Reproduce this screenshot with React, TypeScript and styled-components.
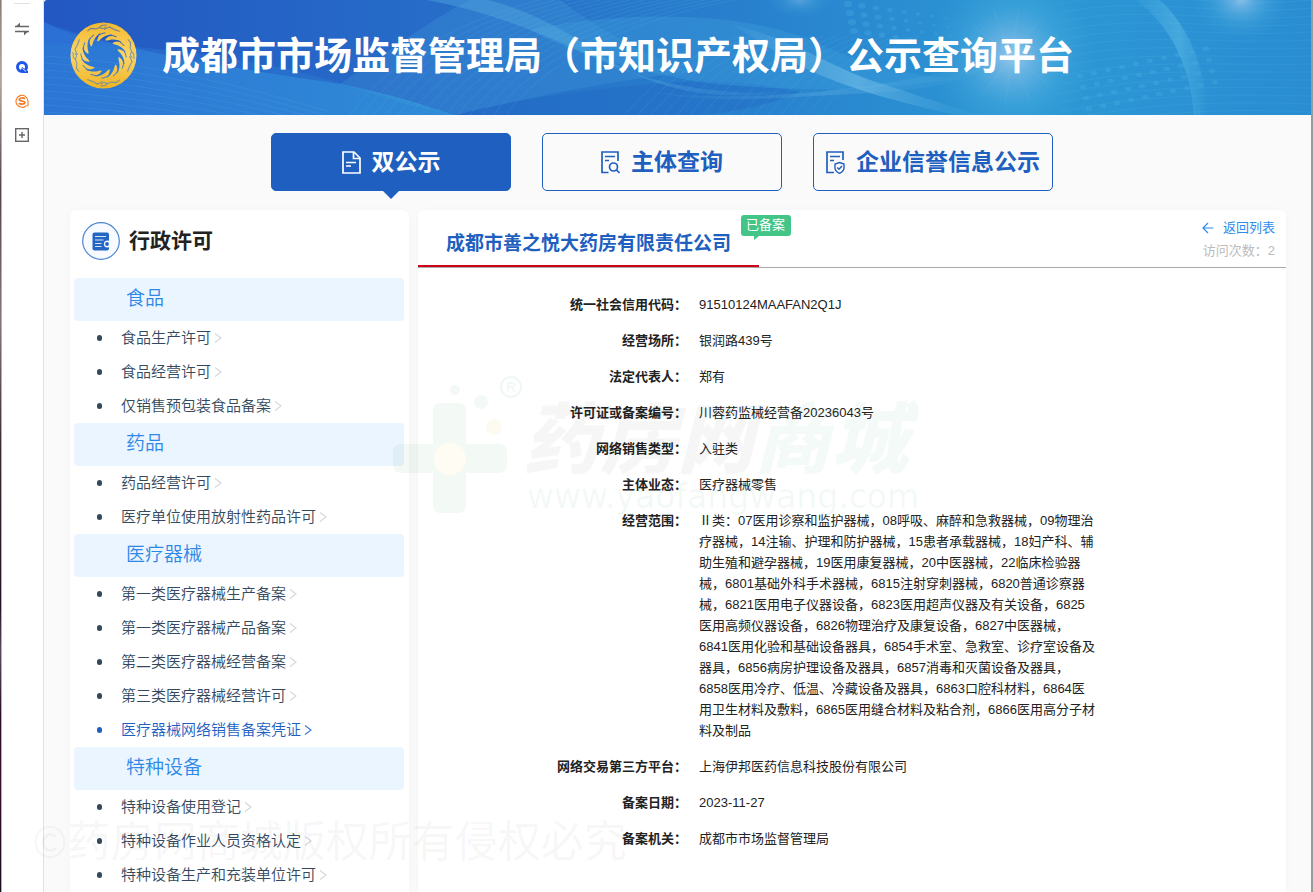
import React from "react";
import styled, { createGlobalStyle } from "styled-components";

const GlobalStyle = createGlobalStyle`
  * { box-sizing: border-box; }
  body {
    margin: 0;
    background: #fafafa;
    color: #222;
    font-family: "Liberation Sans", "Noto Sans CJK SC", sans-serif;
    font-size: 13px;
    line-height: 21px;
  }
  button { font-family: inherit; border: 0; background: none; padding: 0; cursor: pointer; }
  a { color: inherit; text-decoration: none; }
  h1, h2, h3, ul, dl, dd { margin: 0; padding: 0; }
`;

const Shell = styled.div`
  position: relative;
  display: flex;
  min-height: 100vh;
  overflow: hidden;
`;

const DesktopEdge = styled.div`
  flex: none;
  width: 2px;
  border-right: 1px solid #b5b0b2;
  background: linear-gradient(#8d7d78 0%, #b5a89f 9%, #54434a 21%, #85787a 36%, #3c2935 50%, #241222 68%, #5a4c5c 73%, #2b0f25 80%, #3c0f28 88%, #150a1c 100%);
`;

const WindowEdge = styled.div`
  flex: none;
  width: 2px;
  background: #999;
`;

const Rail = styled.aside`
  flex: none;
  width: 42px;
  display: flex;
  flex-direction: column;
  align-items: center;
  padding: 3px 1px 0 0;
  background: #fff;
  border-right: 1px solid #e2e2e4;
`;

const RailDivider = styled.div`
  width: 16px;
  height: 1px;
  margin-bottom: 4px;
  background: #e0e0e0;
`;

const RailButton = styled.button<{ $tall?: boolean }>`
  display: flex;
  align-items: center;
  justify-content: center;
  width: 32px;
  height: ${(p) => (p.$tall ? 42 : 34)}px;
`;

const Page = styled.div`
  flex: 1;
  min-width: 0;
  display: flex;
  flex-direction: column;
  background: #fafafa;
`;

const Banner = styled.header`
  position: relative;
  display: flex;
  align-items: center;
  gap: 25px;
  height: 115px;
  padding: 0 26px 4px;
  border-top-left-radius: 4px;
  overflow: hidden;
  background: #2878cd;
`;

const BannerArt = styled.svg`
  position: absolute;
  inset: 0;
  width: 100%;
  height: 100%;
`;

const Emblem = styled.svg`
  position: relative;
  flex: none;
  width: 67px;
  height: 67px;
`;

const BannerTitle = styled.h1`
  position: relative;
  color: #fff;
  font-size: 38px;
  line-height: 56px;
  font-weight: 700;
  white-space: nowrap;
`;

const Tabs = styled.nav`
  display: flex;
  justify-content: center;
  gap: 31px;
  padding: 18px 31px 19px 0;
`;

const Tab = styled.button<{ $active?: boolean }>`
  position: relative;
  display: flex;
  align-items: center;
  justify-content: center;
  gap: 11px;
  width: 240px;
  height: 58px;
  border: 1px solid #1e5fbf;
  border-radius: 5px;
  background: ${(p) => (p.$active ? "#1e5fbf" : "#fafafa")};
  color: ${(p) => (p.$active ? "#fff" : "#1e5fbf")};
  font-size: 23px;
  line-height: 34px;
  font-weight: 700;
  white-space: nowrap;

  &::after {
    content: "";
    display: ${(p) => (p.$active ? "block" : "none")};
    position: absolute;
    top: 100%;
    left: 50%;
    margin-left: -9px;
    border: 9px solid transparent;
    border-top-color: #1e5fbf;
    border-bottom: 0;
  }
`;

const Columns = styled.div`
  flex: 1;
  display: flex;
  align-items: stretch;
  gap: 9px;
  padding: 0 25px 0 26px;
`;

const Card = styled.section`
  background: #fff;
  border-radius: 6px 6px 0 0;
  box-shadow: 0 0 10px rgba(0, 0, 0, 0.025);
`;

const Sidebar = styled(Card)`
  flex: none;
  width: 339px;
  padding: 0 5px 0 4px;
`;

const SidebarHead = styled.div`
  display: flex;
  align-items: center;
  gap: 9px;
  height: 68px;
  padding: 0 8px 6px;
`;

const SidebarTitle = styled.h2`
  font-size: 21px;
  line-height: 30px;
  font-weight: 700;
`;

const GroupTitle = styled.h3`
  height: 43px;
  padding-left: 52px;
  border-radius: 4px;
  background: #eaf5ff;
  color: #2f88e6;
  font-size: 19px;
  line-height: 41px;
  font-weight: 350;
`;

const GroupList = styled.ul`
  list-style: none;
`;

const GroupItem = styled.li<{ $current?: boolean }>`
  display: flex;
  align-items: center;
  height: 34px;
  padding-left: 23px;
  color: ${(p) => (p.$current ? "#1e5fbf" : "#34495e")};
  font-size: 15px;
  line-height: 22px;
  font-weight: 350;

  &::before {
    content: "";
    width: 5px;
    height: 6px;
    margin-right: 19px;
    border-radius: 3px;
    background: currentColor;
  }
`;

const GroupLink = styled.a<{ $current?: boolean }>`
  display: flex;
  align-items: center;
  gap: 3px;

  svg { color: ${(p) => (p.$current ? "#3f7fd8" : "#d5d8dc")}; }
`;

const Detail = styled(Card)`
  position: relative;
  flex: 1;
  min-width: 0;
`;

const DetailHead = styled.div`
  display: flex;
  justify-content: space-between;
  height: 58px;
  border-bottom: 1px solid #aaa;
`;

const CompanyName = styled.h2`
  position: relative;
  padding: 20px 28px 0;
  border-bottom: 2px solid #d0021b;
  color: #1e5fbf;
  font-size: 19px;
  line-height: 28px;
  font-weight: 700;
  white-space: nowrap;
`;

const StatusTag = styled.span`
  position: absolute;
  top: 5px;
  left: 100%;
  margin-left: -18px;
  padding-left: 5px;
  width: 50px;
  height: 21px;
  border-radius: 3px;
  background: #42c587;
  color: #fff;
  font-size: 13px;
  line-height: 19px;
  font-weight: 400;

  &::after {
    content: "";
    position: absolute;
    top: 100%;
    left: 13px;
    border-top: 4px solid #42c587;
    border-right: 5px solid transparent;
  }
`;

const DetailAside = styled.div`
  display: flex;
  flex-direction: column;
  align-items: flex-end;
  gap: 2px;
  padding: 7px 11px 0 0;
`;

const BackLink = styled.a`
  display: flex;
  align-items: center;
  gap: 9px;
  color: #2d8cf0;
`;

const Visits = styled.span`
  color: #bbb;
`;

const Fields = styled.dl`
  display: grid;
  grid-template-columns: 31% 47%;
  column-gap: 12px;
  row-gap: 15px;
  padding-top: 26px;
`;

const FieldLabel = styled.dt`
  text-align: right;
  font-weight: 700;
`;

const FieldValue = styled.dd`
  white-space: nowrap;
`;

const Line = styled.span`
  display: block;
`;

const BrandMark = styled.svg`
  position: absolute;
  top: 160px;
  left: -30px;
  width: 540px;
  height: 160px;
  pointer-events: none;
`;

const CopyrightMark = styled.div`
  position: absolute;
  left: 32px;
  bottom: 22px;
  color: rgba(0, 0, 0, 0.05);
  font-family: "Noto Sans CJK SC", sans-serif;
  font-size: 43px;
  line-height: 64px;
  font-weight: 400;
  white-space: nowrap;
  pointer-events: none;
`;

const range = (n: number) => Array.from({ length: n }, (_, i) => i);

function BannerBackground() {
  return (
    <BannerArt viewBox="44 0 1267 115" preserveAspectRatio="none" aria-hidden="true">
      <defs>
        <linearGradient id="sky" x1="0" x2="1">
          <stop offset="0" stopColor="#2458c2" />
          <stop offset="0.3" stopColor="#266cc8" />
          <stop offset="0.55" stopColor="#2880cd" />
          <stop offset="0.78" stopColor="#2c98d5" />
          <stop offset="1" stopColor="#2a8dd2" />
        </linearGradient>
        <linearGradient id="deep" x1="0" x2="1">
          <stop offset="0" stopColor="#2257c2" stopOpacity="0.9" />
          <stop offset="1" stopColor="#2468c6" stopOpacity="0" />
        </linearGradient>
        <linearGradient id="sea" x1="0" x2="1">
          <stop offset="0" stopColor="#2b6fd4" />
          <stop offset="1" stopColor="#3192d7" />
        </linearGradient>
        <linearGradient id="ribbon" x1="0" x2="1">
          <stop offset="0" stopColor="#5cb4e2" stopOpacity="0.35" />
          <stop offset="0.5" stopColor="#5cb4e2" stopOpacity="0.35" />
          <stop offset="1" stopColor="#5cb4e2" stopOpacity="0.08" />
        </linearGradient>
        <linearGradient id="streak" x1="0" x2="1">
          <stop offset="0" stopColor="#6abce6" stopOpacity="0.1" />
          <stop offset="0.5" stopColor="#7cc4ea" stopOpacity="0.7" />
          <stop offset="1" stopColor="#4aaade" stopOpacity="0.1" />
        </linearGradient>
        <linearGradient id="arc" x1="0" x2="1">
          <stop offset="0" stopColor="#5abbe6" stopOpacity="0.1" />
          <stop offset="0.6" stopColor="#5abbe6" stopOpacity="0.55" />
          <stop offset="1" stopColor="#5abbe6" stopOpacity="0" />
        </linearGradient>
        <radialGradient id="flare">
          <stop offset="0" stopColor="#a3cdee" stopOpacity="0.9" />
          <stop offset="0.25" stopColor="#7bbce7" stopOpacity="0.7" />
          <stop offset="0.6" stopColor="#4fb0df" stopOpacity="0.35" />
          <stop offset="1" stopColor="#3ba4da" stopOpacity="0" />
        </radialGradient>
      </defs>
      <rect x="44" width="1267" height="115" fill="url(#sky)" />
      <path d="M44 22C120 52 260 72 340 84C400 96 430 108 456 115H44Z" fill="url(#sea)" />
      <path d="M44 43C150 44 270 58 360 90C400 104 430 110 456 115H44Z" fill="#2f80d6" opacity="0.35" />
      <path d="M44 22C70 36 120 50 210 52C300 64 350 78 400 96L430 0H44Z" fill="url(#deep)" opacity="0.55" />
      <path d="M340 84C390 50 440 14 470 0H560C600 30 640 52 690 72C600 82 520 100 456 115C430 108 380 94 340 84Z" fill="#4da2dc" opacity="0.24" />
      <path d="M456 115C520 98 590 90 650 84C720 78 760 84 800 92C760 108 730 112 700 115Z" fill="#1f63c4" opacity="0.35" />
      <path d="M530 30C600 14 720 8 800 36C850 58 900 78 960 78C880 92 780 92 700 82C630 70 570 52 530 30Z" fill="#3fa1dc" opacity="0.35" />
      <path d="M427 0C490 12 540 32 600 60C650 84 720 96 790 92C700 104 640 84 590 48C560 26 520 8 488 0Z" fill="url(#ribbon)" />
      <path d="M730 24C790 38 830 66 870 80C910 92 950 108 985 115H955C900 102 850 90 800 66C770 50 750 34 730 24Z" fill="url(#streak)" opacity="0.75" />
      <path d="M650 92C720 100 800 96 880 84C940 74 985 66 1010 50C985 82 920 92 850 94C780 98 710 104 650 92Z" fill="url(#streak)" opacity="0.35" />
      <g fill="none" stroke="#63b7e8" strokeWidth="1" opacity="0.16">
        {range(14).map((i) => (
          <path key={i} d={`M${350 + i * 12} 115C${390 + i * 12} 60 ${460 + i * 13} 20 ${540 + i * 15} 0`} />
        ))}
        {range(16).map((i) => (
          <path key={i} d={`M${625 + i * 13} 115C${650 + i * 13} 84 ${690 + i * 12} 54 ${740 + i * 12} 36`} />
        ))}
        {range(11).map((i) => (
          <path key={i} d={`M44 ${56 + i * 7}C140 ${62 + i * 7} 230 ${82 + i * 6} 330 ${112 + i * 5}`} />
        ))}
        {range(16).map((i) => (
          <path key={i} d={`M1060 ${4 + i * 9}C1140 ${-14 + i * 9} 1220 ${10 + i * 7} 1311 ${i * 8}`} />
        ))}
      </g>
      <ellipse cx="800" cy="0" rx="34" ry="18" fill="url(#flare)" opacity="0.45" />
      <ellipse cx="1012" cy="56" rx="84" ry="84" fill="url(#flare)" />
      <ellipse cx="1241" cy="0" rx="48" ry="40" fill="url(#flare)" opacity="0.85" />
      <g stroke="#b6ddf4" strokeWidth="1" opacity="0.08">
        {range(12).map((i) => (
          <path key={i} d="M1012 46V6" transform={`rotate(${i * 30 + 8} 1012 56)`} />
        ))}
      </g>
      <path d="M1136 0C1168 24 1190 62 1194 115H1208C1206 64 1186 24 1160 0Z" fill="url(#arc)" />
      <g fill="#4db2e2" opacity="0.3">
        {range(32).map((i) => {
          const col = i % 8;
          const row = Math.floor(i / 8);
          return <ellipse key={i} cx={848 + col * 14 + row * 2} cy={4 + row * 9 + col * 2} rx={Math.max(1, 4 - col * 0.4)} ry={Math.max(1, 3 - col * 0.3)} />;
        })}
        {range(40).map((i) => {
          const col = i % 10;
          const row = Math.floor(i / 10);
          return <ellipse key={i} cx={1080 + col * 14 + row * 3} cy={76 + row * 11 - col * 3} rx="3" ry="2.2" />;
        })}
      </g>
    </BannerArt>
  );
}

function SunbirdEmblem() {
  return (
    <Emblem viewBox="-34 -34 68 68" role="img" aria-label="徽标">
      <defs>
        <linearGradient id="gold" x1="0" y1="0" x2="0" y2="1">
          <stop offset="0" stopColor="#f3b92e" />
          <stop offset="0.5" stopColor="#fbd568" />
          <stop offset="1" stopColor="#f0b323" />
        </linearGradient>
        <mask id="cutouts">
          <rect x="-34" y="-34" width="68" height="68" fill="#fff" />
          <circle r="15.500" fill="#000" />
          {range(12).map((i) => (
            <path key={i} d="M-5 -14C-2 -18.500 3 -21 9 -21.500C5 -19.500 2 -17.500 1 -14Z" fill="#000" transform={`rotate(${i * 30})`} />
          ))}
          {range(12).map((i) => (
            <path key={i} d="M-6 -19.500C-4 -21.500 -1 -22.800 2 -23" fill="none" stroke="#000" strokeWidth="0.9" transform={`rotate(${i * 30})`} />
          ))}
          {range(4).map((i) => (
            <g key={i} fill="none" stroke="#666" strokeWidth="1.100" strokeLinecap="round" transform={`rotate(${i * 90})`}>
              <path d="M-16 -25L-13 -27.500L-8 -27L-4 -28.500L-2 -30.500L3 -31M-4 -28.500C-1 -27 1 -27 2 -29M1 -26.500L6 -29L12 -26L16 -24.500" />
            </g>
          ))}
        </mask>
      </defs>
      <circle r="33.500" fill="url(#gold)" mask="url(#cutouts)" />
    </Emblem>
  );
}

type TabIconKind = "file" | "search" | "shield";

function TabIcon({ kind }: { kind: TabIconKind }) {
  return (
    <svg width="19" height="23" viewBox="0 0 19 23" fill="none" stroke="currentColor" strokeWidth="1.700" aria-hidden="true">
      {kind === "file" && (
        <>
          <path d="M1 1H12L18 7V22H1Z" />
          <path d="M11.500 1V7.500H18M4 11.500H14M4 15H9" />
        </>
      )}
      {kind === "search" && (
        <>
          <path d="M17 10V1H1V21.500H7.500M4 5.500H14M4 9.500H8" />
          <circle cx="12.500" cy="16" r="4" />
          <path d="M15.500 19L18.500 22" />
        </>
      )}
      {kind === "shield" && (
        <>
          <path d="M17 9V1H1V21.500H8M4 5.500H14M4 9.500H8" />
          <path d="M13.500 11.500L18 13V17C18 19.500 16 21.200 13.500 22.300C11 21.200 9 19.500 9 17V13Z" strokeWidth="1.400" />
          <path d="M11.300 16.500L13 18.200L16 15" strokeWidth="1.400" />
        </>
      )}
    </svg>
  );
}

function Chevron() {
  return (
    <svg width="8" height="12" viewBox="0 0 8 12" fill="none" stroke="currentColor" strokeWidth="1.200" aria-hidden="true">
      <path d="M1 1.500L7 6L1 10.500" />
    </svg>
  );
}

function LicenseIcon() {
  return (
    <svg width="38" height="38" viewBox="0 0 38 38" aria-hidden="true">
      <circle cx="19" cy="19" r="18.300" fill="#f7fafe" stroke="#4d85d0" strokeWidth="1.200" />
      <rect x="10.500" y="10.500" width="16.500" height="18" rx="2" fill="#2466c4" />
      <path d="M13 14.500H24M13 18H21.500M13 21.500H19.500M13 24.500H19.500" stroke="#d5e4f7" strokeWidth="1.200" />
      <circle cx="25.500" cy="22" r="3.600" fill="#f7fafe" />
      <circle cx="25" cy="22" r="1.900" fill="#2466c4" />
    </svg>
  );
}

interface Entry { name: string; current?: boolean }

const groups: { title: string; items: Entry[] }[] = [
  { title: "食品", items: [{ name: "食品生产许可" }, { name: "食品经营许可" }, { name: "仅销售预包装食品备案" }] },
  { title: "药品", items: [{ name: "药品经营许可" }, { name: "医疗单位使用放射性药品许可" }] },
  {
    title: "医疗器械",
    items: [
      { name: "第一类医疗器械生产备案" },
      { name: "第一类医疗器械产品备案" },
      { name: "第二类医疗器械经营备案" },
      { name: "第三类医疗器械经营许可" },
      { name: "医疗器械网络销售备案凭证", current: true },
    ],
  },
  {
    title: "特种设备",
    items: [{ name: "特种设备使用登记" }, { name: "特种设备作业人员资格认定" }, { name: "特种设备生产和充装单位许可" }],
  },
];

const fields: { label: string; lines: string[] }[] = [
  { label: "统一社会信用代码", lines: ["91510124MAAFAN2Q1J"] },
  { label: "经营场所", lines: ["银润路439号"] },
  { label: "法定代表人", lines: ["郑有"] },
  { label: "许可证或备案编号", lines: ["川蓉药监械经营备20236043号"] },
  { label: "网络销售类型", lines: ["入驻类"] },
  { label: "主体业态", lines: ["医疗器械零售"] },
  {
    label: "经营范围",
    lines: [
      "Ⅱ类：07医用诊察和监护器械，08呼吸、麻醉和急救器械，09物理治",
      "疗器械，14注输、护理和防护器械，15患者承载器械，18妇产科、辅",
      "助生殖和避孕器械，19医用康复器械，20中医器械，22临床检验器",
      "械，6801基础外科手术器械，6815注射穿刺器械，6820普通诊察器",
      "械，6821医用电子仪器设备，6823医用超声仪器及有关设备，6825",
      "医用高频仪器设备，6826物理治疗及康复设备，6827中医器械，",
      "6841医用化验和基础设备器具，6854手术室、急救室、诊疗室设备及",
      "器具，6856病房护理设备及器具，6857消毒和灭菌设备及器具，",
      "6858医用冷疗、低温、冷藏设备及器具，6863口腔科材料，6864医",
      "用卫生材料及敷料，6865医用缝合材料及粘合剂，6866医用高分子材",
      "料及制品",
    ],
  },
  { label: "网络交易第三方平台", lines: ["上海伊邦医药信息科技股份有限公司"] },
  { label: "备案日期", lines: ["2023-11-27"] },
  { label: "备案机关", lines: ["成都市市场监督管理局"] },
];

const tabs: { label: string; icon: TabIconKind }[] = [
  { label: "双公示", icon: "file" },
  { label: "主体查询", icon: "search" },
  { label: "企业信誉信息公示", icon: "shield" },
];

function SideRail() {
  return (
    <Rail>
      <RailDivider />
      <RailButton $tall aria-label="切换">
        <svg width="14" height="14" viewBox="0 0 14 14" fill="none" stroke="#666" strokeWidth="1.500">
          <path d="M0 4.500H14M0 9.500H14" />
          <path d="M0.500 5L5 0.500V5ZM13.500 9L9 13.500V9Z" fill="#666" stroke="none" />
        </svg>
      </RailButton>
      <RailButton aria-label="搜索">
        <svg width="14" height="14" viewBox="0 0 14 14">
          <circle cx="7" cy="7" r="4.500" fill="none" stroke="#1f56e8" strokeWidth="3" />
          <path d="M7 7L13 11V13H8L6 10Z" fill="#1f56e8" />
          <path d="M7.500 8.500L11 11.500" stroke="#fff" strokeWidth="0.900" />
        </svg>
      </RailButton>
      <RailButton aria-label="搜狗">
        <svg width="14" height="14" viewBox="0 0 14 14" fill="none" stroke="#f5781f">
          <path d="M11.500 11.300A6 6 0 1 1 13 7V12.500" strokeWidth="1.100" />
          <path d="M10 4.700C8.500 3.600 4.300 3.600 4.300 5.600C4.300 7.500 9.800 6.500 9.800 8.600C9.800 10.500 5.500 10.400 3.800 9.300" strokeWidth="1.700" />
        </svg>
      </RailButton>
      <RailButton aria-label="添加">
        <svg width="14" height="14" viewBox="0 0 14 14" fill="none" stroke="#666">
          <rect x="0.700" y="0.700" width="12.600" height="12.600" strokeWidth="1.400" />
          <path d="M7 4V10M4 7H10" strokeWidth="1.400" />
        </svg>
      </RailButton>
    </Rail>
  );
}

function PharmacyMark() {
  return (
    <BrandMark viewBox="388 370 540 160" aria-hidden="true">
      <g fill="#2f9e5c" fillOpacity="0.06">
        <path d="M441 403H458Q466 403 466 411V444H499Q507 444 507 452V465Q507 473 499 473H466V505Q466 513 458 513H441Q433 513 433 505V473H401Q393 473 393 465V452Q393 444 401 444H433V411Q433 403 441 403Z" />
        <circle cx="455" cy="390" r="5" />
        <circle cx="481" cy="402" r="7" />
      </g>
      <circle cx="450" cy="459" r="16" fill="#fffcf3" />
      <circle cx="494" cy="427" r="8" fill="#fdfbf0" />
      <circle cx="511" cy="387" r="10" fill="none" stroke="#2f9e5c" strokeOpacity="0.08" strokeWidth="2" />
      <text x="506" y="392" fontSize="14" fontWeight="700" fill="#2f9e5c" fillOpacity="0.08">R</text>
      <text x="523" y="467" fontFamily="Noto Sans CJK SC" fontSize="77" fontWeight="900" fontStyle="italic" fill="#000" fillOpacity="0.035">
        药房网<tspan fill="#2f9e5c" fillOpacity="0.05">商城</tspan>
      </text>
      <text x="527" y="508" fontFamily="DejaVu Sans" fontSize="33" fill="#2f9e5c" fillOpacity="0.06">www.yaofangwang.com</text>
    </BrandMark>
  );
}

export default function App() {
  return (
    <Shell>
      <GlobalStyle />
      <DesktopEdge />
      <SideRail />
      <Page>
        <Banner>
          <BannerBackground />
          <SunbirdEmblem />
          <BannerTitle>成都市市场监督管理局（市知识产权局）公示查询平台</BannerTitle>
        </Banner>
        <Tabs>
          {tabs.map((tab, i) => (
            <Tab key={tab.label} $active={i === 0}>
              <TabIcon kind={tab.icon} />
              {tab.label}
            </Tab>
          ))}
        </Tabs>
        <Columns>
          <Sidebar>
            <SidebarHead>
              <LicenseIcon />
              <SidebarTitle>行政许可</SidebarTitle>
            </SidebarHead>
            {groups.map((group) => (
              <React.Fragment key={group.title}>
                <GroupTitle>{group.title}</GroupTitle>
                <GroupList>
                  {group.items.map((item) => (
                    <GroupItem key={item.name} $current={item.current}>
                      <GroupLink href="#" $current={item.current}>
                        {item.name}
                        <Chevron />
                      </GroupLink>
                    </GroupItem>
                  ))}
                </GroupList>
              </React.Fragment>
            ))}
          </Sidebar>
          <Detail>
            <DetailHead>
              <CompanyName>
                成都市善之悦大药房有限责任公司
                <StatusTag>已备案</StatusTag>
              </CompanyName>
              <DetailAside>
                <BackLink href="#">
                  <svg width="12" height="12" viewBox="0 0 12 12" fill="none" stroke="currentColor" strokeWidth="1.200" aria-hidden="true">
                    <path d="M11.500 6H1M6 1L1 6L6 11" />
                  </svg>
                  返回列表
                </BackLink>
                <Visits>访问次数：2</Visits>
              </DetailAside>
            </DetailHead>
            <Fields>
              {fields.map((field) => (
                <React.Fragment key={field.label}>
                  <FieldLabel>{field.label}：</FieldLabel>
                  <FieldValue>
                    {field.lines.map((line) => (
                      <Line key={line}>{line}</Line>
                    ))}
                  </FieldValue>
                </React.Fragment>
              ))}
            </Fields>
            <PharmacyMark />
          </Detail>
        </Columns>
      </Page>
      <WindowEdge />
      <CopyrightMark>©药房网商城版权所有侵权必究</CopyrightMark>
    </Shell>
  );
}
